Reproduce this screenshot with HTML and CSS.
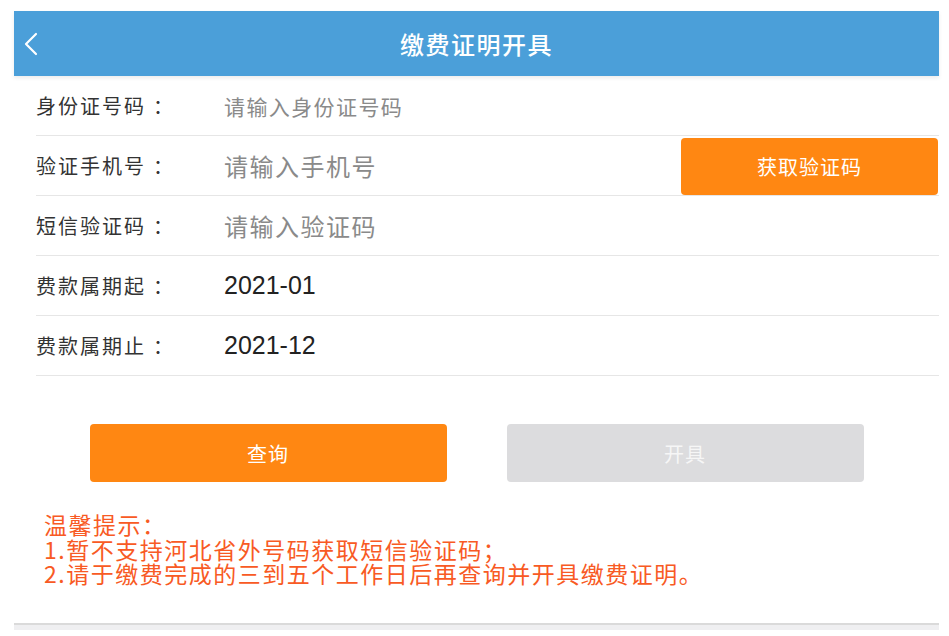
FILE: index.html
```html
<!DOCTYPE html>
<html lang="zh-CN">
<head>
<meta charset="utf-8">
<title>缴费证明开具</title>
<link rel="stylesheet" href="styles.css">
</head>
<body>
<div class="page">
  <header class="topbar">
    <span class="back"><svg width="16" height="24" viewBox="0 0 16 24"><path d="M13 2 L3 12 L13 22" fill="none" stroke="#fff" stroke-width="2.2" stroke-linecap="round" stroke-linejoin="round"/></svg></span>
    <h1 class="title">缴费证明开具</h1>
  </header>
  <div class="form">
    <div class="row">
      <span class="label">身份证号码<span class="colon">：</span></span>
      <span class="ph ph-small">请输入身份证号码</span>
    </div>
    <div class="row">
      <span class="label">验证手机号<span class="colon">：</span></span>
      <span class="ph">请输入手机号</span>
      <button class="btn btn-code">获取验证码</button>
    </div>
    <div class="row">
      <span class="label">短信验证码<span class="colon">：</span></span>
      <span class="ph">请输入验证码</span>
    </div>
    <div class="row">
      <span class="label">费款属期起<span class="colon">：</span></span>
      <span class="val">2021-01</span>
    </div>
    <div class="row">
      <span class="label">费款属期止<span class="colon">：</span></span>
      <span class="val">2021-12</span>
    </div>
  </div>
  <div class="actions">
    <button class="btn btn-main">查询</button>
    <button class="btn btn-disabled">开具</button>
  </div>
  <div class="tips">
    <div class="tip-line"><span class="tip-text">温馨提示<span class="punct">：</span></span></div>
    <div class="tip-line"><span class="tip-text">1.暂不支持河北省外号码获取短信验证码<span class="punct">；</span></span></div>
    <div class="tip-line"><span class="tip-text">2.请于缴费完成的三到五个工作日后再查询并开具缴费证明。</span></div>
  </div>
  <div class="footer-bar"></div>
</div>
</body>
</html>
```
FILE: styles.css
```css
* { box-sizing: border-box; }
html, body { margin: 0; padding: 0; background: #fff; }
body {
  font-family: "Noto Sans CJK SC", "Liberation Sans", sans-serif;
  padding: 11px 10px 0 14px;
}
.page { width: 925px; }
.topbar {
  height: 65px;
  background: #4b9fd9;
  display: flex;
  align-items: center;
  justify-content: center;
  position: relative;
  box-shadow: 0 2px 4px rgba(0,0,0,0.08);
}
.back {
  position: absolute;
  left: 9px;
  top: 21px;
  display: flex;
}
.title {
  margin: 0;
  color: #fff;
  font-size: 24px;
  font-weight: 500;
  letter-spacing: 1.5px;
}
.punct { font-family: "Noto Sans CJK JP", "Noto Sans CJK SC", sans-serif; }
.colon { margin-left: 7px; }
.form { padding-left: 22px; }
.row {
  height: 60px;
  display: flex;
  align-items: center;
  border-bottom: 1px solid #e6e6e6;
}
.label {
  width: 188px;
  font-size: 20px;
  color: #333;
  letter-spacing: 2px;
}
.ph { font-size: 24px; color: #8a8a8a; flex: 1; letter-spacing: 1.5px; }
.ph-small { font-size: 21px; letter-spacing: 1.4px; }
.val {
  font-family: "Liberation Sans", sans-serif;
  font-size: 25px;
  color: #222;
}
.btn {
  border: none;
  border-radius: 4px;
  color: #fff;
  font-family: "Noto Sans CJK SC", sans-serif;
  font-size: 20px;
  padding: 0;
  letter-spacing: 1px;
}
.btn-code {
  width: 257px;
  height: 57px;
  background: #ff8712;
  margin-top: 2px;
  margin-right: 1px;
}
.actions {
  display: flex;
  justify-content: center;
  gap: 60px;
  padding-top: 48px;
}
.btn-main, .btn-disabled { width: 357px; height: 58px; }
.btn-main { background: #ff8712; }
.btn-disabled { background: #dcdcde; color: #f6f6f6; }
.tips {
  padding: 30px 0 0 30px;
  color: #f85a24;
  font-size: 23px;
  letter-spacing: 1.5px;
}
.tip-line { height: 24.5px; line-height: 24.5px; }
.tip-text { display: inline-block; height: 24.5px; line-height: 24.5px; vertical-align: top; }
.footer-bar {
  margin-top: 37px;
  height: 7px;
  background: #efeff1;
  border-top: 2px solid #dadada;
}
```
